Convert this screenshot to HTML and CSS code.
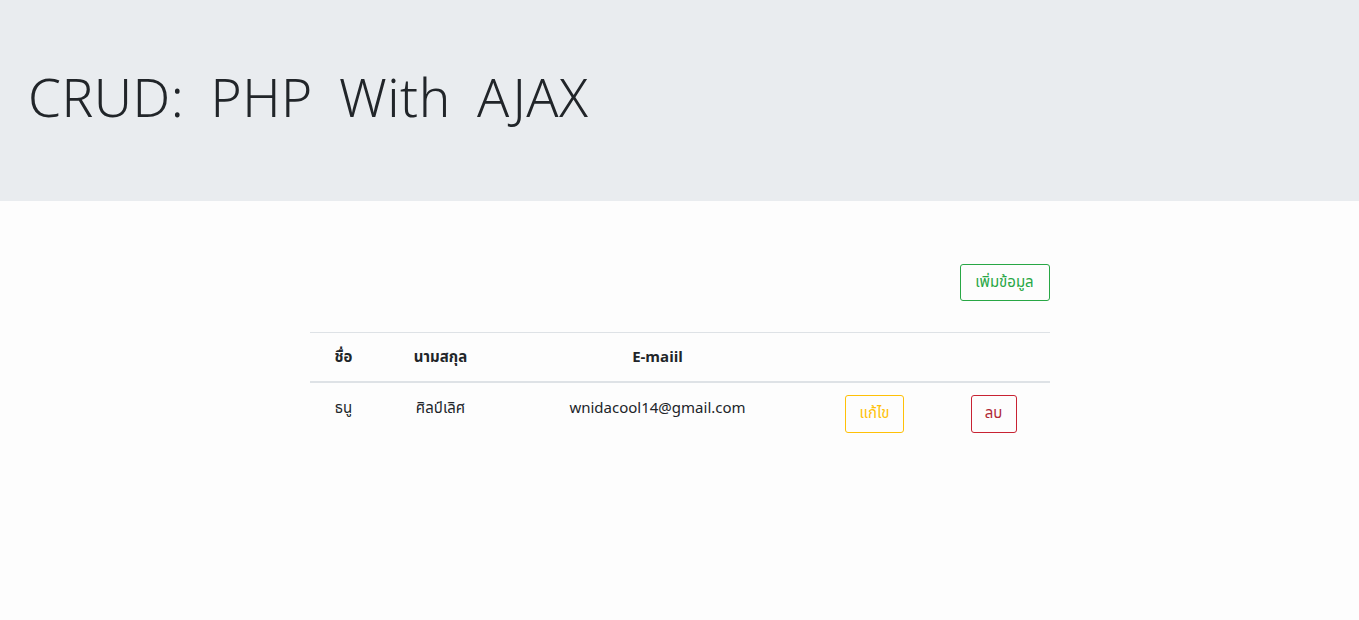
FILE: index.html
```html
<!DOCTYPE html>
<html lang="th">
<head>
<meta charset="utf-8">
<title>CRUD: PHP With AJAX</title>
<link rel="stylesheet" href="styles.css">
</head>
<body>
<header class="jumbotron">
  <h1 class="display">CRUD: PHP With AJAX</h1>
</header>
<main class="content">
  <div class="toolbar">
    <button class="btn btn-add">เพิ่มข้อมูล</button>
  </div>
  <table class="data-table">
    <thead>
      <tr>
        <th class="c1">ชื่อ</th>
        <th class="c2">นามสกุล</th>
        <th class="c3">E-maiil</th>
        <th class="c4"></th>
        <th class="c5"></th>
      </tr>
    </thead>
    <tbody>
      <tr>
        <td>ธนู</td>
        <td>ศิลป์เลิศ</td>
        <td>wnidacool14@gmail.com</td>
        <td><button class="btn btn-edit">แก้ไข</button></td>
        <td><button class="btn btn-del">ลบ</button></td>
      </tr>
    </tbody>
  </table>
</main>
</body>
</html>
```

FILE: styles.css
```css
html, body {
  margin: 0;
  padding: 0;
}
body {
  background: #fdfdfd;
  color: #212529;
  font-family: "Noto Sans Thai", "Noto Sans", "DejaVu Sans", sans-serif;
  font-size: 15px;
}
.jumbotron {
  background: #e9ecef;
  height: 201px;
  display: flex;
  align-items: center;
  padding: 0 28px;
  box-sizing: border-box;
}
.display {
  margin: 0;
  font-weight: 300;
  font-size: 53px;
  letter-spacing: 0.5px;
  word-spacing: 12px;
  color: #212529;
  line-height: 1.2;
  padding-top: 2px;
}
.content {
  width: 740px;
  margin: 63px auto 0;
}
.toolbar {
  display: flex;
  justify-content: flex-end;
  margin-bottom: 31px;
}
.btn {
  font-family: inherit;
  font-size: 15px;
  background: transparent;
  border: 1px solid;
  border-radius: 3px;
  padding: 0;
  height: 38px;
  line-height: 36px;
  cursor: pointer;
}
.btn-add {
  color: #28a745;
  border-color: #28a745;
  width: 90px;
  height: 37px;
}
.btn-edit {
  color: #ffc107;
  border-color: #ffc107;
  width: 59px;
}
.btn-del {
  color: #b02a37;
  border-color: #c82333;
  width: 46px;
}
.data-table {
  width: 100%;
  border-collapse: collapse;
  text-align: center;
}
.data-table th {
  font-weight: 700;
  height: 48px;
  border-top: 1px solid #dee2e6;
  border-bottom: 2px solid #dee2e6;
  padding: 0;
  vertical-align: middle;
}
.data-table td {
  padding: 12px 0;
  vertical-align: top;
  line-height: 28px;
}
.c1 { width: 68px; }
.c2 { width: 126px; }
.c3 { width: 308px; }
.c4 { width: 126px; }
.c5 { width: 112px; }
```
